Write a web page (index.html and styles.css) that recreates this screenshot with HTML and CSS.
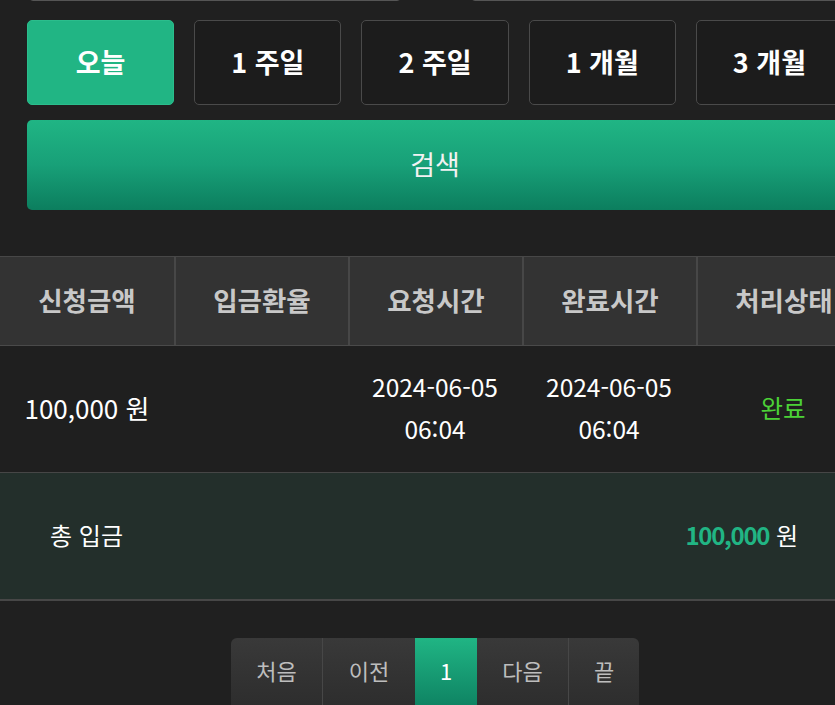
FILE: index.html
```html
<!DOCTYPE html>
<html lang="ko">
<head>
<meta charset="utf-8">
<title>입금내역</title>
<link rel="stylesheet" href="styles.css">
</head>
<body>
<div class="page">
  <div class="form">
    <div class="date-row">
      <div class="date-input"></div>
      <div class="date-input"></div>
    </div>
    <div class="periods">
      <button class="period active">오늘</button>
      <button class="period">1 주일</button>
      <button class="period">2 주일</button>
      <button class="period">1 개월</button>
      <button class="period">3 개월</button>
    </div>
    <button class="search">검색</button>
  </div>

  <div class="table">
    <div class="row head">
      <div class="cell">신청금액</div>
      <div class="cell">입금환율</div>
      <div class="cell">요청시간</div>
      <div class="cell">완료시간</div>
      <div class="cell">처리상태</div>
    </div>
    <div class="row data">
      <div class="cell amount">100,000 원</div>
      <div class="cell"></div>
      <div class="cell">2024-06-05<br>06:04</div>
      <div class="cell">2024-06-05<br>06:04</div>
      <div class="cell done">완료</div>
    </div>
    <div class="total">
      <span class="total-label">총 입금</span>
      <span class="total-value"><b>100,000</b> 원</span>
    </div>
  </div>

  <div class="pager">
    <span class="pg w1">처음</span>
    <span class="pg w2">이전</span>
    <span class="pg num active">1</span>
    <span class="pg w1">다음</span>
    <span class="pg last">끝</span>
  </div>
</div>
</body>
</html>
```

FILE: styles.css
```css
html, body {
  margin: 0;
  padding: 0;
  background: #202020;
  overflow: hidden;
  height: 705px;
}

body {
  font-family: "Noto Sans CJK KR", "Noto Sans", sans-serif;
  color: #ffffff;
}

.page {
  width: 870px;
}

.form {
  padding: 0 27px;
}

.date-row {
  display: flex;
  justify-content: space-between;
  height: 50px;
  margin-top: -49px;
}

.date-input {
  box-sizing: border-box;
  width: 372px;
  height: 50px;
  border: 1px solid #555555;
  border-radius: 4px;
  margin-left: 2px;
}

.periods {
  display: flex;
  gap: 20px;
  margin-top: 19px;
}

.period {
  flex: 1;
  height: 85px;
  box-sizing: border-box;
  background: #1c1c1c;
  border: 1.5px solid #4a4a4a;
  border-radius: 5px;
  color: #ffffff;
  font-family: inherit;
  font-size: 27px;
  font-weight: 700;
  padding: 0 0 3px;
}

.period.active {
  background: #21b584;
  border-color: #2bbd8c;
}

.search {
  display: block;
  width: 100%;
  height: 90px;
  margin-top: 15px;
  border: none;
  border-radius: 5px;
  background: linear-gradient(to bottom, #20b584 0%, #18a078 50%, #0c7e5e 100%);
  color: #f2f2f2;
  font-family: inherit;
  font-size: 27px;
  font-weight: 400;
  padding: 0 0 4px;
}

.table {
  margin-top: 46px;
  border-top: 1px solid #474747;
}

.row {
  display: grid;
  grid-template-columns: repeat(5, 1fr);
}

.head {
  height: 88px;
  background: #333333;
  border-bottom: 1px solid #4a4a4a;
}

.head .cell {
  display: flex;
  align-items: center;
  justify-content: center;
  padding-bottom: 4px;
  color: #c8c8c8;
  font-size: 26.5px;
  font-weight: 700;
  border-left: 2px solid #474747;
}

.head .cell:first-child {
  border-left: none;
}

.data {
  height: 126px;
  background: #1f1f1f;
  border-bottom: 1px solid #464646;
}

.data .cell {
  display: flex;
  align-items: center;
  justify-content: center;
  text-align: center;
  font-size: 24.5px;
  line-height: 42px;
  color: #ffffff;
  padding-bottom: 2px;
}

.data .cell.amount {
  font-size: 26px;
}

.data .cell.done {
  color: #4cd137;
}

.total {
  display: flex;
  align-items: center;
  justify-content: space-between;
  box-sizing: border-box;
  height: 128px;
  padding: 0 72px 4px 50px;
  background: #232f2b;
  border-bottom: 2px solid #474747;
  font-size: 24px;
}

.total-value b {
  color: #21b584;
  font-weight: 700;
  letter-spacing: -1.3px;
}

.pager {
  display: flex;
  justify-content: center;
  margin-top: 37px;
}

.pg {
  display: flex;
  align-items: center;
  justify-content: center;
  height: 70px;
  padding-bottom: 6px;
  box-sizing: border-box;
  background: linear-gradient(to bottom, #393939, #2d2d2d);
  color: #bdbdbd;
  font-size: 22px;
  border-left: 1px solid #474747;
}

.pg.w1 {
  width: 91px;
}

.pg.w2 {
  width: 93px;
}

.pg:first-child {
  border-left: none;
  border-top-left-radius: 6px;
}

.pg.num {
  width: 62px;
}

.pg.last {
  width: 71px;
  border-top-right-radius: 6px;
}

.pg.active {
  background: linear-gradient(to bottom, #20b584, #0e8262);
  color: #ffffff;
  border-left: none;
}

.pg.active + .pg {
  border-left: none;
}
```
